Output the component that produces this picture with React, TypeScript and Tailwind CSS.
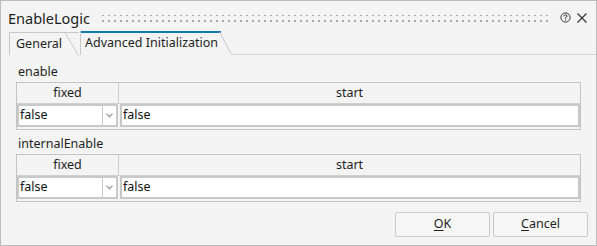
import React from "react";

const font = { fontFamily: '"Noto Sans", "Liberation Sans", sans-serif' };

function Grip() {
  return (
    <svg className="flex-1 h-[10px] ml-[12px] mr-[12px] mt-[5px]" preserveAspectRatio="none">
      <defs>
        <pattern id="dots" width="6" height="6" patternUnits="userSpaceOnUse">
          <rect x="0" y="0" width="2" height="2" fill="#a8a8a8" />
        </pattern>
      </defs>
      <rect x="0" y="1" width="100%" height="8" fill="url(#dots)" />
    </svg>
  );
}

function Section({ label }: { label: string }) {
  return (
    <div className="flex flex-col">
      <div className="h-[16px] flex items-center pl-[2px] text-[12.5px] text-[#1e1e1e]">{label}</div>
      <div className="w-[565px] border border-[#c4c4c4] mt-[2px] flex flex-col">
        <div className="flex h-[21px] border-b border-[#d0d0d0] text-[12.5px] text-[#1e1e1e]">
          <div className="w-[102px] border-r border-[#d0d0d0] flex items-center justify-center">fixed</div>
          <div className="flex-1 flex items-center justify-center">start</div>
        </div>
        <div className="flex h-[25px] pb-[2px] gap-[2px] text-[12.5px] text-[#111]">
          <div className="w-[101px] flex border-2 border-[#c8c8c8] bg-white">
            <div className="flex-1 flex items-center pl-[1px]">false</div>
            <div className="w-[14px] border-l border-[#c8c8c8] flex items-center justify-center">
              <svg width="7" height="5" viewBox="0 0 7 5">
                <path d="M0.5 0.8 L3.5 3.8 L6.5 0.8" stroke="#a0a0a0" strokeWidth="1.3" fill="none" />
              </svg>
            </div>
          </div>
          <div className="flex-1 border-2 border-[#c8c8c8] bg-white flex items-center pl-[1px]">false</div>
        </div>
      </div>
    </div>
  );
}

export default function App() {
  return (
    <div style={font} className="w-[597px] h-[246px] border border-[#bdbdbd] bg-[#f4f4f4] flex flex-col overflow-hidden">
      <div className="h-[30px] flex items-center pl-[7px] pr-[8px]">
        <span className="text-[14.5px] text-[#1e1e1e] mt-[5px]">EnableLogic</span>
        <Grip />
        <div className="flex items-center gap-[5px] mt-[3px]">
          <svg width="11" height="11" viewBox="0 0 11 11">
            <circle cx="5.5" cy="5.5" r="4.6" stroke="#333" strokeWidth="1" fill="none" />
            <path d="M3.9 4.3 Q3.9 2.9 5.5 2.9 Q7.1 2.9 7.1 4.2 Q7.1 5 5.5 5.6 L5.5 6.6" stroke="#333" strokeWidth="1" fill="none" />
            <rect x="5" y="7.5" width="1" height="1" fill="#333" />
          </svg>
          <svg width="12" height="12" viewBox="0 0 12 12">
            <path d="M1.5 1.5 L10.5 10.5 M10.5 1.5 L1.5 10.5" stroke="#333" strokeWidth="1.2" />
          </svg>
        </div>
      </div>
      <div className="h-[24px] flex items-end">
        <div className="relative ml-[8px] w-[70px] h-[23px] border-l border-t border-[#c8c8c8] flex items-center pl-[6px] text-[12.5px] text-[#1e1e1e]">
          General
          <svg className="absolute right-0 top-[-1px]" width="14" height="24" viewBox="0 0 14 24">
            <path d="M0 0.5 L13.5 23.5" stroke="#c8c8c8" strokeWidth="1" fill="none" />
          </svg>
        </div>
        <div className="relative ml-[1px] w-[152px] h-[24px] border-l border-[#c8c8c8] flex items-center pl-[4px] pt-[1px] text-[12.5px] text-[#1e1e1e]">
          <div className="absolute left-0 top-0 w-[140px] h-[2px] bg-[#1479b0]" />
          Advanced Initialization
          <svg className="absolute right-0 top-0" width="13" height="24" viewBox="0 0 13 24">
            <path d="M0.5 1 L12.5 23.5" stroke="#c8c8c8" strokeWidth="1" fill="none" />
          </svg>
        </div>
        <div className="flex-1 border-b border-[#d4d4d4] h-px" />
      </div>
      <div className="flex flex-col pl-[15px] pt-[9px] gap-[6px]">
        <Section label="enable" />
        <Section label="internalEnable" />
      </div>
      <div className="flex-1" />
      <div className="flex justify-end gap-[3px] pr-[8px] pb-[8px] text-[12.5px] text-[#1e1e1e]">
        <button className="w-[95px] h-[25px] border border-[#cacaca] rounded-[2px] bg-[#f6f6f6]">
          <span className="underline underline-offset-2">O</span>K
        </button>
        <button className="w-[95px] h-[25px] border border-[#cacaca] rounded-[2px] bg-[#f6f6f6]">
          <span className="underline underline-offset-2">C</span>ancel
        </button>
      </div>
    </div>
  );
}
